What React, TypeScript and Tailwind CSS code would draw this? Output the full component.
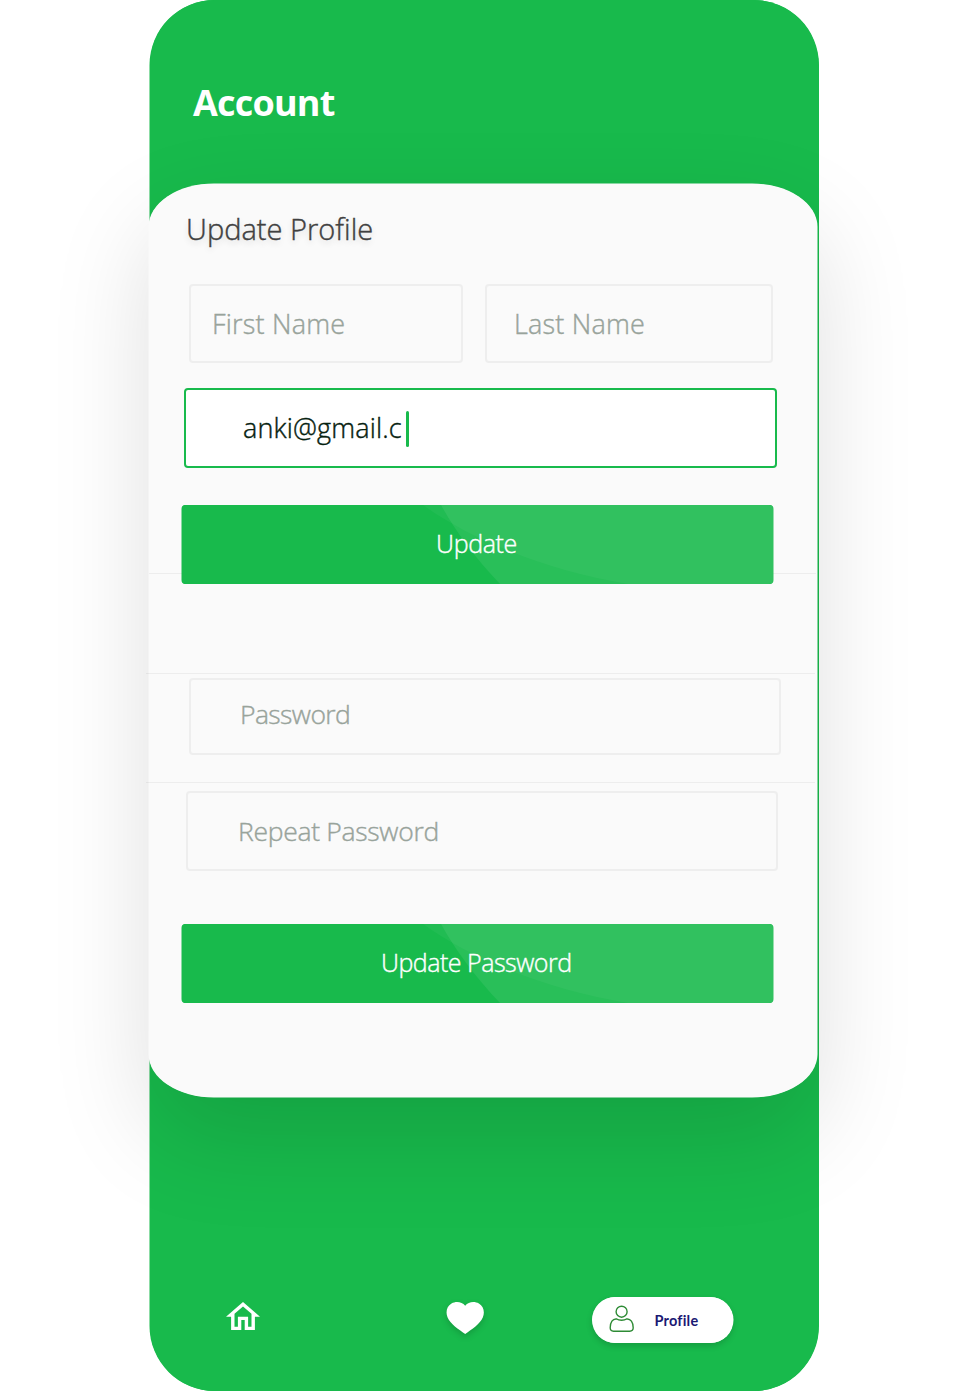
import React from "react";

type FieldProps = { label: string; className: string; textClassName: string };

function Field({ label, className, textClassName }: FieldProps) {
  return (
    <div className={`relative flex items-start rounded-[4px] border-2 border-[#eeeeee] ${className}`}>
      <span className={`whitespace-nowrap leading-[36px] text-[#98a39b] ${textClassName}`}>{label}</span>
    </div>
  );
}

function ActionButton({ label, className, textClassName }: FieldProps) {
  return (
    <button
      className={`relative z-10 ml-[33px] flex h-[79px] w-[591px] shrink-0 items-start overflow-hidden rounded-[4px] bg-[#18ba4c] shadow-[-0.5px_0_0_0_#18ba4c,0.5px_0_0_0_#32c25f] ${className}`}
    >
      <svg className="absolute inset-0 h-full w-full" viewBox="0 0 591 79" aria-hidden="true">
        <path d="M259 0C272 24 293 53 318 79H592V0Z" fill="#ffffff" fillOpacity=".075" />
        <path d="M241 0C285 32 360 65 446 79H592V0Z" fill="#ffffff" fillOpacity=".04" />
      </svg>
      <span className={`relative whitespace-nowrap text-[25px] leading-[34px] text-white ${textClassName}`}>{label}</span>
    </button>
  );
}

function HomeIcon() {
  return (
    <svg className="ml-[76px] mt-[5px] h-[28px] w-[34px]" viewBox="2 3 20 17" preserveAspectRatio="none" fill="white">
      <path d="M12 5.69l5 4.5V18h-2v-6H9v6H7v-7.81l5-4.5M12 3L2 12h3v8h6v-6h2v6h6v-8h3L12 3z" />
    </svg>
  );
}

function HeartIcon() {
  return (
    <svg
      className="ml-[186px] mt-[5px] h-[32px] w-[38px] overflow-visible drop-shadow-[0_3px_3px_rgba(0,0,0,0.16)]"
      viewBox="0 0 38 32"
      fill="white"
    >
      <path d="M19.2 3.8C22.5-.3 28.5-1 32.9 1.6C37.6 4.4 39 10.2 36.9 15.2C34.1 22 25.8 27.2 19.2 32C12.6 27.2 4.3 22 1.5 15.2C-.6 10.2.8 4.4 5.5 1.6C9.9-1 15.9-.3 19.2 3.8Z" />
    </svg>
  );
}

function PersonIcon() {
  return (
    <svg className="ml-[17px] mt-[8px] h-[28px] w-[26px]" viewBox="0 0 26 28" fill="none" stroke="#2e8b35" strokeWidth="1.4">
      <circle cx="12.6" cy="6.7" r="5.5" />
      <path d="M7.7 14C9.8 15.6 15.4 15.6 17.5 14C21.7 13.4 24.2 17.5 24.2 22.8Q24.2 26.2 20.7 26.2H4.5Q1.2 26.2 1.2 22.8C1.2 17.5 3.6 13.4 7.7 14Z" />
    </svg>
  );
}

export default function App() {
  return (
    <main className="flex h-[1392px] w-[967px] overflow-hidden bg-white font-['Open_Sans','Noto_Sans',sans-serif] font-light">
      <div className="ml-[150px] flex h-[1391px] w-[669px] flex-col rounded-[65px] bg-[#18ba4c] shadow-[-0.5px_0_0_0_#18ba4c]">
        <header className="h-[184px] shrink-0 pl-[43px] pt-[78px]">
          <h1 className="text-[36px] font-bold leading-[49px] tracking-[-0.8px] text-white">Account</h1>
        </header>

        <section className="-ml-px flex h-[913px] w-[668px] shrink-0 flex-col rounded-[65px/43px] bg-[#fafafa] shadow-[0_0_0_0.5px_#fafafa,0_40px_100px_rgba(0,0,0,0.13)] [-webkit-text-stroke:0.4px_currentColor]">
          <h2 className="ml-[37px] mt-[25px] whitespace-nowrap text-[29px] leading-[40px] tracking-[0.02px] text-[#404040] [text-shadow:0_3px_6px_rgba(0,0,0,0.16)]">
            Update Profile
          </h2>

          <div className="ml-[40px] mt-[35px] flex gap-[22px]">
            <Field
              label="First Name"
              className="h-[79px] w-[274px] pl-[21px] pt-[20px]"
              textClassName="text-[27px] tracking-[0.2px]"
            />
            <Field
              label="Last Name"
              className="h-[79px] w-[288px] pl-[27px] pt-[20px]"
              textClassName="text-[27px] tracking-[0.2px]"
            />
          </div>

          <div className="ml-[35px] mt-[25px] flex h-[80px] w-[593px] shrink-0 items-start rounded-[4px] border-2 border-[#18ba4c] bg-white pl-[57px] pt-[20px]">
            <span className="w-[159px] whitespace-nowrap text-[27px] leading-[36px] tracking-[0.15px] text-[#06210f]">
              anki@gmail.c
            </span>
            <span className="ml-[4px] mt-px h-[36px] w-[3px] rounded-full bg-[#18ba4c]" />
          </div>

          <ActionButton label="Update" className="mt-[37px]" textClassName="ml-[254px] mt-[21px] tracking-[-0.35px]" />
          <hr className="-mt-[11px] h-px w-[667px] shrink-0 border-0 bg-black/5" />

          <hr className="-ml-[3px] mt-[99px] h-px w-[669px] shrink-0 border-0 bg-black/5" />
          <Field
            label="Password"
            className="ml-[40px] mt-[4px] h-[77px] w-[592px] pl-[49px] pt-[16px]"
            textClassName="text-[26.5px] tracking-[-0.6px]"
          />
          <hr className="-ml-[3px] mt-[27px] h-px w-[669px] shrink-0 border-0 bg-black/5" />
          <Field
            label="Repeat Password"
            className="ml-[37px] mt-[8px] h-[80px] w-[592px] pl-[50px] pt-[20px]"
            textClassName="text-[26.5px] tracking-[-0.3px]"
          />

          <ActionButton
            label="Update Password"
            className="mt-[53px]"
            textClassName="ml-[199px] mt-[21px] tracking-[-0.5px]"
          />
        </section>

        <nav className="mt-[200px] flex items-start">
          <HomeIcon />
          <HeartIcon />
          <div className="ml-[108px] flex h-[46px] w-[141px] items-start rounded-full bg-white shadow-[0.5px_0_0_0_#fff,0_3px_6px_rgba(0,0,0,0.16)]">
            <PersonIcon />
            <span className="ml-[19px] mt-[14px] pl-[0.5px] font-['Lato',sans-serif] text-[14.5px] font-bold leading-[20px] tracking-[0.2px] text-[#1b1973]">
              Profile
            </span>
          </div>
        </nav>
      </div>
    </main>
  );
}
